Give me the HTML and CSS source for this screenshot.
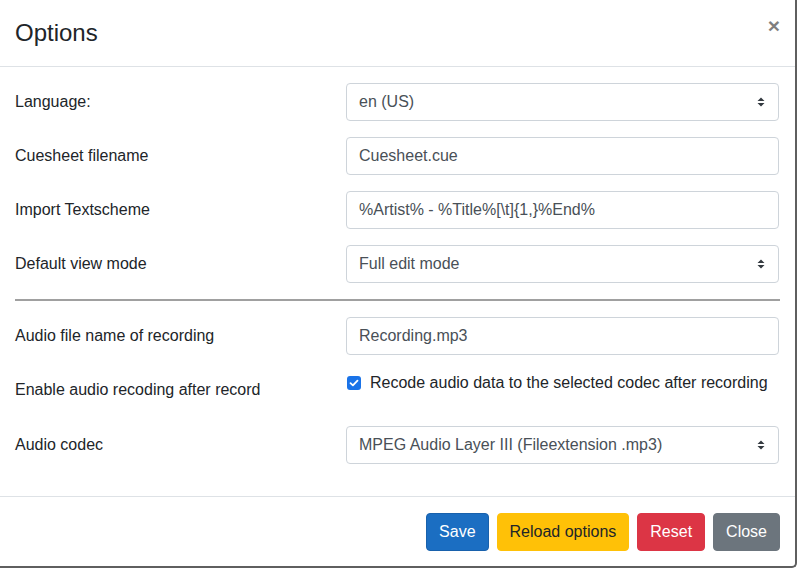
FILE: index.html
```html
<!DOCTYPE html>
<html>
<head>
<meta charset="utf-8">
<link rel="stylesheet" href="styles.css">
</head>
<body>
<div class="modal">
  <div class="modal-header">
    <h5 class="modal-title">Options</h5>
    <button class="close" type="button">×</button>
  </div>
  <div class="modal-body">
    <div class="row">
      <label class="col-label">Language:</label>
      <div class="control select"><span>en (US)</span><svg class="caret" width="8" height="10" viewBox="0 0 8 10"><path d="M4 0.5 L7.5 4 H0.5 Z M4 9.5 L7.5 6 H0.5 Z" fill="#343a40"/></svg></div>
    </div>
    <div class="row">
      <label class="col-label">Cuesheet filename</label>
      <div class="control"><span>Cuesheet.cue</span></div>
    </div>
    <div class="row">
      <label class="col-label">Import Textscheme</label>
      <div class="control"><span>%Artist% - %Title%[\t]{1,}%End%</span></div>
    </div>
    <div class="row">
      <label class="col-label">Default view mode</label>
      <div class="control select"><span>Full edit mode</span><svg class="caret" width="8" height="10" viewBox="0 0 8 10"><path d="M4 0.5 L7.5 4 H0.5 Z M4 9.5 L7.5 6 H0.5 Z" fill="#343a40"/></svg></div>
    </div>
    <hr class="divider">
    <div class="row">
      <label class="col-label">Audio file name of recording</label>
      <div class="control"><span>Recording.mp3</span></div>
    </div>
    <div class="row row-check">
      <label class="col-label check-label">Enable audio recoding after record</label>
      <div class="form-check">
        <span class="checkbox"><svg width="10" height="8" viewBox="0 0 10 8"><path d="M1.5 4.2 L3.9 6.4 L8.5 1.6" stroke="#fff" stroke-width="1.8" fill="none" stroke-linecap="round" stroke-linejoin="round"/></svg></span>
        <span class="check-text">Recode audio data to the selected codec after recording</span>
      </div>
    </div>
    <div class="row">
      <label class="col-label">Audio codec</label>
      <div class="control select"><span>MPEG Audio Layer III (Fileextension .mp3)</span><svg class="caret" width="8" height="10" viewBox="0 0 8 10"><path d="M4 0.5 L7.5 4 H0.5 Z M4 9.5 L7.5 6 H0.5 Z" fill="#343a40"/></svg></div>
    </div>
  </div>
  <div class="modal-footer">
    <button class="btn btn-primary" type="button">Save</button>
    <button class="btn btn-warning" type="button">Reload options</button>
    <button class="btn btn-danger" type="button">Reset</button>
    <button class="btn btn-secondary" type="button">Close</button>
  </div>
</div>
</body>
</html>
```
FILE: styles.css
```css
* { box-sizing: border-box; }
html, body { margin: 0; padding: 0; background: #fff; }
body {
  font-family: "Liberation Sans", Arial, sans-serif;
  font-size: 16px;
  line-height: 1.5;
  color: #212529;
}
.modal {
  width: 797px;
  height: 568px;
  background: #fff;
  border-right: 2px solid #5f5f5f;
  border-bottom: 2px solid #5f5f5f;
  border-bottom-right-radius: 5px;
  display: flex;
  flex-direction: column;
}
.modal-header {
  display: flex;
  justify-content: space-between;
  align-items: flex-start;
  padding: 15px 15px 15px 15px;
  border-bottom: 1px solid #dee2e6;
  height: 68px;
}
.modal-title {
  margin: 0;
  font-size: 24px;
  font-weight: 400;
  line-height: 36px;
  color: #212529;
}
.close {
  background: none;
  border: 0;
  padding: 0;
  margin: 0 0 0 0;
  font-family: "Liberation Sans", Arial, sans-serif;
  font-size: 21px;
  font-weight: 700;
  line-height: 1;
  color: #000;
  opacity: .5;
}
.modal-body {
  padding: 16px 15px 32px 15px;
  display: flex;
  flex-direction: column;
  gap: 16px;
}
.row {
  display: grid;
  grid-template-columns: 331px 1fr;
  align-items: start;
  height: 38px;
}
.col-label {
  padding-top: 7px;
  line-height: 24px;
}
.control {
  height: 38px;
  border: 1px solid #ced4da;
  border-radius: 4px;
  padding: 6px 12px;
  color: #495057;
  line-height: 24px;
  display: flex;
  align-items: center;
  justify-content: space-between;
  margin-right: 1px;
}
.caret { margin-right: 1px; }
.divider {
  margin: 0;
  border: 0;
  border-top: 2px solid #a0a0a0;
  height: 0;
}
.row-check { height: 39px; }
.check-label { padding-top: 7px; }
.form-check {
  display: flex;
  align-items: center;
  gap: 9px;
  padding-top: 0;
  padding-left: 1px;
  line-height: 24px;
}
.checkbox {
  width: 14px;
  height: 14px;
  border-radius: 3px;
  background: #1a73e8;
  display: flex;
  align-items: center;
  justify-content: center;
}
.check-text { color: #212529; }
.modal-footer {
  border-top: 1px solid #dee2e6;
  padding: 16px 15px;
  display: flex;
  justify-content: flex-end;
  gap: 8px;
}
.btn {
  font-family: "Liberation Sans", Arial, sans-serif;
  font-size: 16px;
  line-height: 24px;
  height: 38px;
  padding: 6px 12px;
  border: 1px solid transparent;
  border-radius: 4px;
}
.btn-primary { background: #1b6ec2; border-color: #1861ac; color: #fff; }
.btn-warning { background: #ffc107; border-color: #ffc107; color: #212529; }
.btn-danger { background: #dc3545; border-color: #dc3545; color: #fff; }
.btn-secondary { background: #6c757d; border-color: #6c757d; color: #fff; }
```
